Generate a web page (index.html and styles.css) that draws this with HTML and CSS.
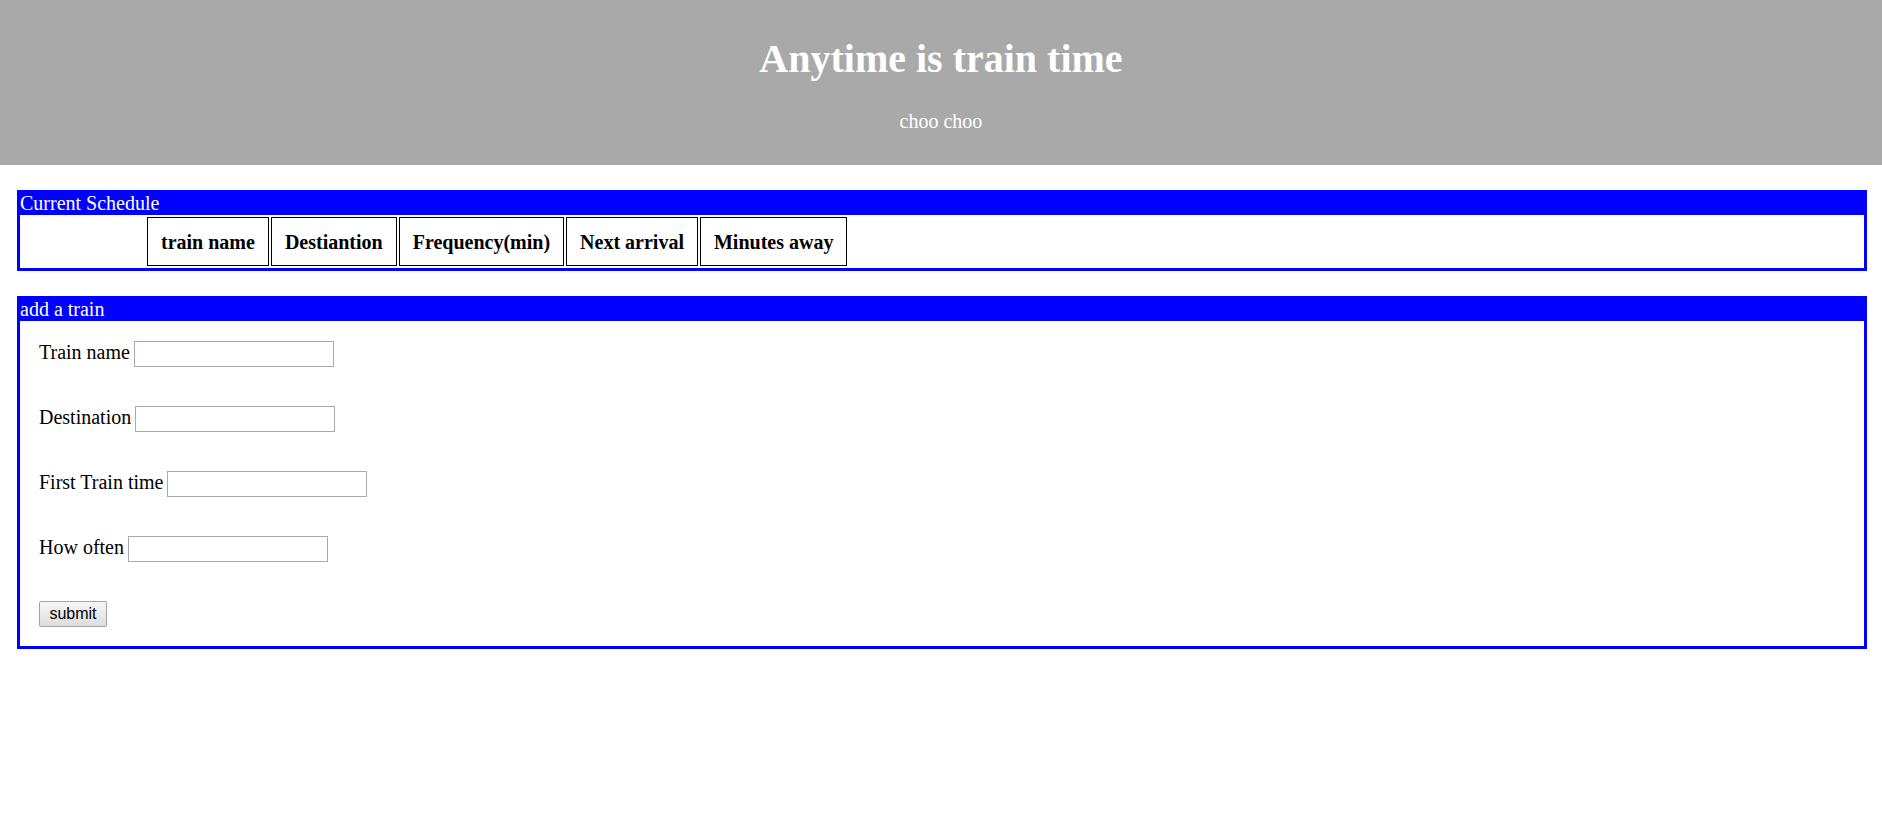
FILE: index.html
```html
<!DOCTYPE html>
<html>
<head>
<meta charset="utf-8">
<title>Train Scheduler</title>
<link rel="stylesheet" href="styles.css">
</head>
<body>
<header class="hero">
  <h1 class="hero-title">Anytime is train time</h1>
  <p class="hero-sub">choo choo</p>
</header>

<section class="panel">
  <div class="panel-head">Current Schedule</div>
  <div class="panel-body">
    <table class="schedule">
      <thead>
        <tr>
          <th>train name</th>
          <th>Destiantion</th>
          <th>Frequency(min)</th>
          <th>Next arrival</th>
          <th>Minutes away</th>
        </tr>
      </thead>
      <tbody></tbody>
    </table>
  </div>
</section>

<section class="panel">
  <div class="panel-head">add a train</div>
  <form class="panel-body train-form">
    <div class="field"><label for="tn">Train name</label><input id="tn" class="text-input" type="text"></div>
    <div class="field"><label for="ds">Destination</label><input id="ds" class="text-input" type="text"></div>
    <div class="field"><label for="ft">First Train time</label><input id="ft" class="text-input" type="text"></div>
    <div class="field"><label for="ho">How often</label><input id="ho" class="text-input" type="text"></div>
    <div class="field"><button type="button" class="btn">submit</button></div>
  </form>
</section>
</body>
</html>
```

FILE: styles.css
```css
html, body {
  margin: 0;
  padding: 0;
  background: #fff;
}

body {
  font-family: "Liberation Serif", "Times New Roman", serif;
  font-size: 20px;
  color: #000;
}

.hero {
  background: #a9a9a9;
  color: #fff;
  text-align: center;
  padding: 36px 0 0;
  height: 165px;
  box-sizing: border-box;
}

.hero-title {
  margin: 0 0 28px;
  font-size: 40px;
  line-height: 46px;
  font-weight: bold;
}

.hero-sub {
  margin: 0;
  font-size: 20px;
  line-height: 23px;
}

.panel {
  margin: 25px 15px 0 17px;
  border: 3px solid #0000ff;
}

.panel-head {
  background: #0000ff;
  color: #fff;
  font-size: 20px;
  line-height: 21px;
  padding-bottom: 1px;
}

.schedule {
  margin-left: 125px;
  border-collapse: separate;
  border-spacing: 2.5px;
}

.schedule th {
  border: 1px solid #000;
  padding: 12.5px 13px;
  font-size: 20px;
  line-height: 22px;
  font-weight: bold;
}

.train-form {
  display: flex;
  flex-direction: column;
  gap: 39px;
  padding: 20px 19px 19px;
}

.field {
  display: flex;
  align-items: baseline;
  gap: 4px;
  line-height: 23px;
}

.text-input {
  width: 200px;
  height: 26px;
  box-sizing: border-box;
  border: 1px solid #a9a9a9;
  padding: 1px 2px;
  margin: 0;
  font-family: "Liberation Sans", Arial, sans-serif;
  font-size: 16px;
  background: #fff;
}

.btn {
  width: 68px;
  height: 26px;
  box-sizing: border-box;
  margin: 0;
  padding: 0 8px;
  border: 1px solid #a3a3a3;
  border-radius: 2px;
  background: linear-gradient(#f6f6f6, #dddddd);
  font-family: "Liberation Sans", Arial, sans-serif;
  font-size: 16px;
  color: #000;
}
```
